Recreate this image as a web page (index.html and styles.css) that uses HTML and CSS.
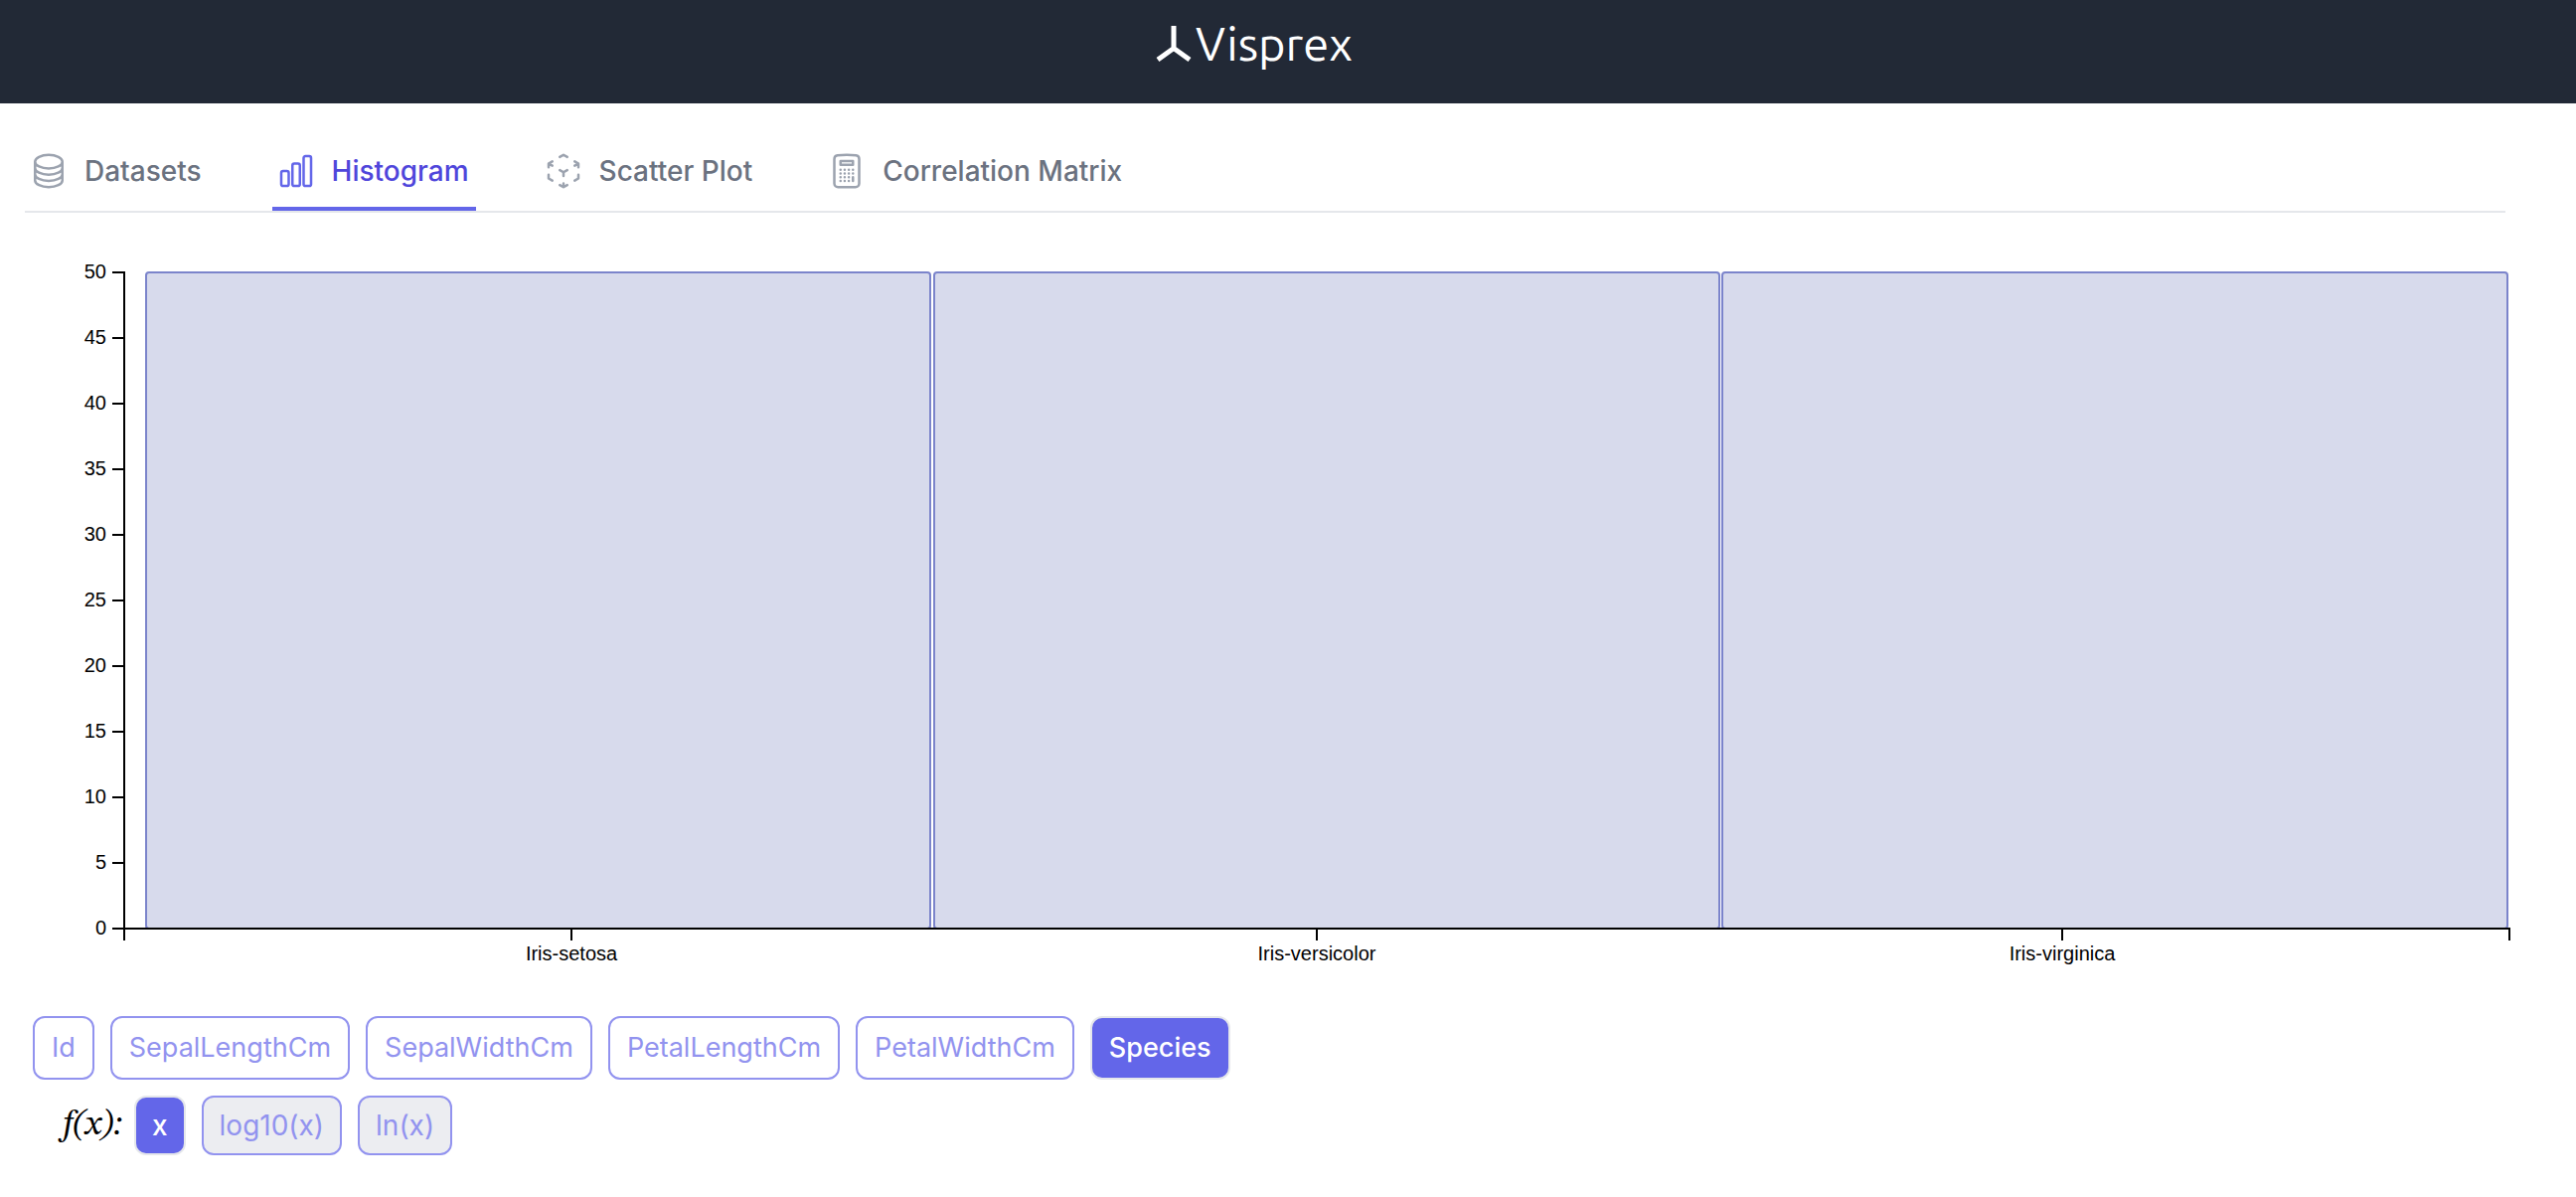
FILE: index.html
```html
<!DOCTYPE html>
<html lang="en">
<head>
<meta charset="utf-8">
<meta name="viewport" content="width=device-width, initial-scale=1">
<title>Visprex</title>
<link rel="stylesheet" href="styles.css">
</head>
<body>
<header class="header">
  <a class="brand" href="#">
    <svg class="brand-mark" viewBox="0 0 36 36" aria-hidden="true"><path d="M18 0V22M2 34L18 22.500L34 34"/></svg>
    <span>Visprex</span>
  </a>
</header>
<main>
  <nav class="tabs" aria-label="Views">
    <a class="tab" href="#datasets">
      <svg class="icon" viewBox="0 0 24 24" aria-hidden="true"><path d="M20.25 6.375c0 2.278-3.694 4.125-8.25 4.125S3.75 8.653 3.75 6.375m16.5 0c0-2.278-3.694-4.125-8.25-4.125S3.75 4.097 3.75 6.375m16.5 0v11.25c0 2.278-3.694 4.125-8.25 4.125s-8.250-1.847-8.250-4.125V6.375m16.5 0v3.75m-16.5-3.75v3.75m16.5 0v3.75C20.25 16.153 16.556 18 12 18s-8.250-1.847-8.250-4.125v-3.75m16.5 0c0 2.278-3.694 4.125-8.25 4.125s-8.250-1.847-8.250-4.125"/></svg>
      <span>Datasets</span>
    </a>
    <a class="tab tab-active" href="#histogram" aria-current="page">
      <svg class="icon" viewBox="0 0 24 24" aria-hidden="true"><path d="M3 13.125C3 12.504 3.504 12 4.125 12h2.25c.621 0 1.125.504 1.125 1.125v6.75C7.5 20.496 6.996 21 6.375 21h-2.25A1.125 1.125 0 0 1 3 19.875v-6.75ZM9.75 8.625c0-.621.504-1.125 1.125-1.125h2.25c.621 0 1.125.504 1.125 1.125v11.25c0 .621-.504 1.125-1.125 1.125h-2.25a1.125 1.125 0 0 1-1.125-1.125V8.625ZM16.5 4.125c0-.621.504-1.125 1.125-1.125h2.25C20.496 3 21 3.504 21 4.125v15.75c0 .621-.504 1.125-1.125 1.125h-2.25a1.125 1.125 0 0 1-1.125-1.125V4.125Z"/></svg>
      <span>Histogram</span>
    </a>
    <a class="tab" href="#scatter-plot">
      <svg class="icon" viewBox="0 0 24 24" aria-hidden="true"><path d="m21 7.5-2.25-1.313M21 7.5v2.25m0-2.25-2.25 1.313M3 7.5l2.25-1.313M3 7.5l2.25 1.313M3 7.5v2.25m9 3 2.25-1.313M12 12.75l-2.25-1.313M12 12.75V15m0 6.75 2.25-1.313M12 21.75V19.5m0 2.25-2.25-1.313m0-16.875L12 2.25l2.25 1.313M21 14.25v2.25l-2.25 1.313m-13.5 0L3 16.5v-2.25"/></svg>
      <span>Scatter Plot</span>
    </a>
    <a class="tab" href="#correlation-matrix">
      <svg class="icon" viewBox="0 0 24 24" aria-hidden="true"><path d="M15.75 15.75V18m-7.5-6.75h.008v.008H8.25v-.008Zm0 2.25h.008v.008H8.25V13.5Zm0 2.25h.008v.008H8.25v-.008Zm0 2.25h.008v.008H8.25V18Zm2.498-6.75h.007v.008h-.007v-.008Zm0 2.25h.007v.008h-.007V13.5Zm0 2.25h.007v.008h-.007v-.008Zm0 2.25h.007v.008h-.007V18Zm2.504-6.75h.008v.008h-.008v-.008Zm0 2.25h.008v.008h-.008V13.5Zm0 2.25h.008v.008h-.008v-.008Zm0 2.25h.008v.008h-.008V18Zm2.498-6.75h.008v.008h-.008v-.008Zm0 2.25h.008v.008h-.008V13.5ZM8.25 6h7.5v2.25h-7.5V6ZM12 2.25c-1.892 0-3.758.11-5.593.322C5.307 2.7 4.5 3.65 4.5 4.757V19.5a2.25 2.25 0 0 0 2.25 2.25h10.5a2.25 2.25 0 0 0 2.25-2.25V4.757c0-1.108-.806-2.057-1.907-2.185A48.507 48.507 0 0 0 12 2.25Z"/></svg>
      <span>Correlation Matrix</span>
    </a>
  </nav>

  <svg class="chart" viewBox="0 0 2592 728" role="img" aria-label="Histogram of Species">
    <g class="bars">
      <rect x="147" y="20" width="789" height="660" rx="3"/>
      <rect x="940" y="20" width="790" height="660" rx="3"/>
      <rect x="1733" y="20" width="790" height="660" rx="3"/>
    </g>
    <path class="axis" d="M113 20H125V680H113M113 614H125M113 548H125M113 482H125M113 416H125M113 350H125M113 284H125M113 218H125M113 152H125M113 86H125"/>
    <path class="axis" d="M125 692V680H2525V692M575 680V692M1325 680V692M2075 680V692"/>
    <g class="labels labels-y">
      <text x="107" y="26">50</text>
      <text x="107" y="92">45</text>
      <text x="107" y="158">40</text>
      <text x="107" y="224">35</text>
      <text x="107" y="290">30</text>
      <text x="107" y="356">25</text>
      <text x="107" y="422">20</text>
      <text x="107" y="488">15</text>
      <text x="107" y="554">10</text>
      <text x="107" y="620">5</text>
      <text x="107" y="686">0</text>
    </g>
    <g class="labels labels-x">
      <text x="575" y="712">Iris-setosa</text>
      <text x="1325" y="712">Iris-versicolor</text>
      <text x="2075" y="712">Iris-virginica</text>
    </g>
  </svg>

  <section class="controls">
    <div class="pills" role="group" aria-label="Column">
      <button class="pill" type="button">Id</button>
      <button class="pill" type="button">SepalLengthCm</button>
      <button class="pill" type="button">SepalWidthCm</button>
      <button class="pill" type="button">PetalLengthCm</button>
      <button class="pill" type="button">PetalWidthCm</button>
      <button class="pill pill-selected" type="button" aria-pressed="true">Species</button>
    </div>
    <div class="transforms" role="group" aria-labelledby="transform-label">
      <span class="fx" id="transform-label">f(x):</span>
      <div class="pills">
        <button class="pill pill-small pill-selected" type="button" aria-pressed="true">x</button>
        <button class="pill pill-small pill-muted" type="button" disabled>log10(x)</button>
        <button class="pill pill-small pill-muted" type="button" disabled>ln(x)</button>
      </div>
    </div>
  </section>
</main>
</body>
</html>
```

FILE: styles.css
```css
*,
*::before,
*::after {
  box-sizing: border-box;
}

body {
  margin: 0;
  background: #fff;
  color: #000;
  font-family: Inter, "Liberation Sans", sans-serif;
  font-size: 28px;
  line-height: 40px;
}

.header {
  display: flex;
  justify-content: center;
  padding: 12px 68px 28px 0;
  background: #222936;
}

.brand {
  display: flex;
  align-items: center;
  gap: 4px;
  color: #fff;
  font-family: Ubuntu, "Noto Sans", sans-serif;
  font-size: 47px;
  line-height: 64px;
  text-decoration: none;
}

.brand-mark {
  width: 36px;
  height: 36px;
  fill: none;
  stroke: currentColor;
  stroke-width: 5;
}

.tabs {
  display: flex;
  gap: 64px;
  margin: 48px 71px 0 25px;
  border-bottom: 2px solid #e5e7eb;
}

.tab {
  display: flex;
  align-items: center;
  gap: 16px;
  padding: 0 7px 16px 4px;
  border-bottom: 4px solid transparent;
  color: #6b7280;
  font-weight: 500;
  white-space: nowrap;
  text-decoration: none;
}

.tab-active {
  border-color: #6366e9;
  color: #4f46db;
}

.icon {
  width: 40px;
  height: 40px;
  fill: none;
  stroke: #9ca3af;
  stroke-width: 1.5;
  stroke-linecap: round;
  stroke-linejoin: round;
}

.tab-active .icon {
  stroke: #6366e9;
}

.chart {
  display: block;
  width: 100%;
  margin-top: 40px;
}

.bars {
  fill: #d7daec;
  stroke: #7b84cb;
  stroke-width: 2;
}

.axis {
  fill: none;
  stroke: #000;
  stroke-width: 2;
}

.labels {
  font-family: "Liberation Sans", Helvetica, Arial, sans-serif;
  font-size: 20px;
}

.labels-y {
  text-anchor: end;
}

.labels-x {
  text-anchor: middle;
}

.controls {
  display: flex;
  flex-direction: column;
  gap: 16px;
  padding: 40px 33px;
}

.pills {
  display: flex;
  flex-wrap: wrap;
  gap: 16px;
}

.pill {
  padding: 10px 17px;
  border: 2px solid #9293ef;
  border-radius: 12px;
  background: #fff;
  color: #9293ef;
  font: inherit;
  font-size: 27px;
}

.pill-small {
  padding: 8px 16px;
  font-size: 28px;
}

.pill-muted {
  background: #ecedf1;
}

.pill-selected {
  border-color: #e5e7eb;
  background: #6366e9;
  color: #fff;
  font-weight: 500;
}

.transforms {
  display: flex;
  align-items: center;
  gap: 12px;
  padding-left: 30px;
}

.fx {
  font-family: "STIX Two Text", "Liberation Serif", serif;
  font-size: 36px;
  font-style: italic;
}
```
